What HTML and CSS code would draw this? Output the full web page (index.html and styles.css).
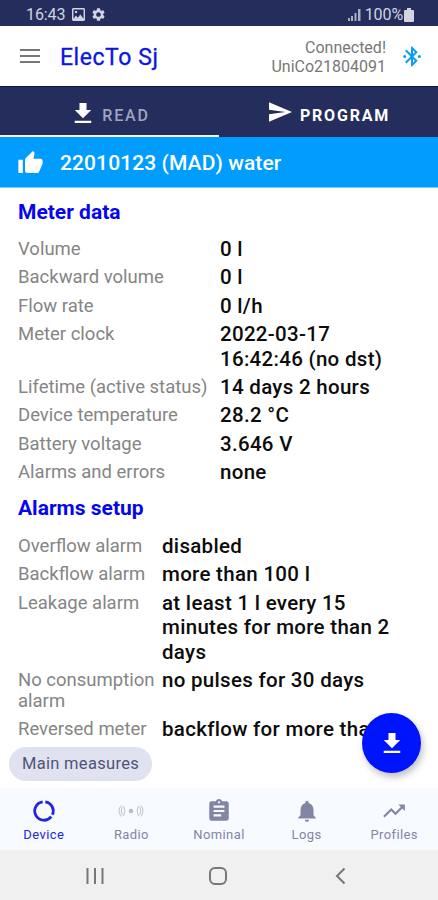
FILE: index.html
```html
<!DOCTYPE html>
<html lang="en">
<head>
<meta charset="utf-8">
<meta name="viewport" content="width=device-width">
<title>ElecTo Sj</title>
<link rel="stylesheet" href="styles.css">
</head>
<body>
<div class="status">
  <span class="clock">16:43</span>
  <svg class="s-img" viewBox="3 3 18 18"><path d="M21 19V5c0-1.100-.9-2-2-2H5c-1.100 0-2 .9-2 2v14c0 1.100.9 2 2 2h14c1.100 0 2-.9 2-2zM5 5h14v13H5zM8.500 13.500l2.500 3 3.500-4.500 4.500 6H5zM7 7h3v3H7z" fill-rule="evenodd"/></svg>
  <svg class="s-gear" viewBox="2 2 20 20"><path d="M19.140 12.940c.04-.3.060-.61.060-.94 0-.32-.02-.64-.07-.94l2.030-1.580c.18-.14.230-.41.120-.61l-1.920-3.320c-.12-.22-.37-.29-.59-.22l-2.390.96c-.5-.38-1.030-.7-1.620-.94l-.36-2.540c-.04-.24-.24-.41-.48-.41h-3.840c-.24 0-.43.170-.47.410l-.36 2.540c-.59.240-1.130.570-1.620.940l-2.390-.96c-.22-.08-.47 0-.59.220L2.740 8.870c-.12.210-.08.470.120.610l2.030 1.580c-.05.3-.09.630-.09.940s.02.640.070.940l-2.030 1.580c-.18.140-.23.410-.12.610l1.920 3.320c.12.220.370.290.590.220l2.390-.96c.5.380 1.030.7 1.620.940l.36 2.540c.05.240.240.410.480.410h3.840c.24 0 .44-.17.470-.41l.36-2.540c.59-.24 1.130-.56 1.620-.94l2.390.96c.22.080.470 0 .59-.22l1.920-3.320c.12-.22.070-.47-.12-.61l-2.010-1.580zM12 15.600c-1.980 0-3.600-1.620-3.600-3.600s1.620-3.600 3.600-3.600 3.600 1.620 3.600 3.600-1.620 3.600-3.600 3.600z"/></svg>
  <svg class="s-signal" viewBox="0 0 13 12"><path d="M0 9h2v3H0zM3 7h2v5H3zM6.500 4h2v8h-2z"/><path d="M10 0h2.500v12H10z"/></svg>
  <span class="pct">100%</span>
  <svg class="s-bat" viewBox="0 0 10 14"><path d="M3 0h4v2h2q1 0 1 1v10q0 1-1 1H1q-1 0-1-1V3q0-1 1-1h2z"/></svg>
</div>
<header class="appbar">
  <div class="menu"><i></i><i></i><i></i></div>
  <h1>ElecTo Sj</h1>
  <div class="conn">Connected!<br>UniCo21804091</div>
  <svg class="bt" viewBox="3 2 18 20"><path d="M17.710 7.710L12 2h-1v7.590L6.410 5 5 6.410 10.590 12 5 17.590 6.410 19 11 14.410V22h1l5.710-5.710-4.300-4.290 4.300-4.290zM13 5.830l1.880 1.880L13 9.590V5.830zm1.880 10.460L13 18.170v-3.760l1.880 1.880z"/><circle cx="4.700" cy="12" r="1.500"/><circle cx="19.300" cy="12" r="1.500"/></svg>
</header>
<nav class="tabs">
  <div class="tab on"><svg class="dl" viewBox="5 3 14 17"><path d="M19 9h-4V3H9v6H5l7 7 7-7zM5 18v2h14v-2H5z"/></svg><span>READ</span></div>
  <div class="tab"><svg class="send" viewBox="2 3 21 18"><path d="M2.010 21L23 12 2.010 3 2 10l15 2-15 2z"/></svg><span>PROGRAM</span></div>
</nav>
<div class="banner">
  <svg viewBox="1 1 22 20"><path d="M1 21h4V9H1v12zm22-11c0-1.100-.9-2-2-2h-6.310l.95-4.570.03-.32c0-.41-.17-.79-.44-1.060L14.170 1 7.590 7.590C7.220 7.950 7 8.450 7 9v10c0 1.100.9 2 2 2h9c.83 0 1.540-.5 1.840-1.220l3.020-7.050c.09-.23.140-.47.140-.73v-2z"/></svg>
  <span>22010123 (MAD) water</span>
</div>
<main class="content">
  <h2>Meter data</h2>
  <dl class="meter">
    <dt>Volume</dt><dd>0 l</dd>
    <dt>Backward volume</dt><dd>0 l</dd>
    <dt>Flow rate</dt><dd>0 l/h</dd>
    <dt>Meter clock</dt><dd>2022-03-17<br>16:42:46 (no dst)</dd>
    <dt>Lifetime (active status)</dt><dd>14 days 2 hours</dd>
    <dt>Device temperature</dt><dd>28.2 °C</dd>
    <dt>Battery voltage</dt><dd>3.646 V</dd>
    <dt>Alarms and errors</dt><dd>none</dd>
  </dl>
  <h2 class="second">Alarms setup</h2>
  <dl class="alarms">
    <dt>Overflow alarm</dt><dd>disabled</dd>
    <dt>Backflow alarm</dt><dd>more than 100 l</dd>
    <dt>Leakage alarm</dt><dd>at least 1 l every 15<br>minutes for more than 2<br>days</dd>
    <dt>No consumption<br>alarm</dt><dd>no pulses for 30 days</dd>
    <dt>Reversed meter</dt><dd>backflow for more tha</dd>
  </dl>
  <div class="chip">Main measures</div>
  <div class="fab"><svg class="dl" viewBox="5 3 14 17"><path d="M19 9h-4V3H9v6H5l7 7 7-7zM5 18v2h14v-2H5z"/></svg></div>
</main>
<nav class="bottom">
  <div class="item on"><svg viewBox="0 0 24 24"><path class="ring" d="M13.200 3.600a8.500 8.500 0 0 1 6.600 11.900M18.700 17.200A8.500 8.500 0 1 1 10.800 3.600"/></svg><span>Device</span></div>
  <div class="item radio"><svg viewBox="0 0 26 26"><circle cx="13" cy="13" r="2.200"/><path class="ln" d="M3 7.500q-4 5.500 0 11M23 7.500q4 5.500 0 11M4.200 9q-2 4 0 8M21.800 9q2 4 0 8M5.500 8q3 5 0 10M20.500 8q-3 5 0 10"/></svg><span>Radio</span></div>
  <div class="item"><svg viewBox="0 0 24 24"><path d="M19 3h-4.180C14.400 1.840 13.300 1 12 1c-1.300 0-2.400.84-2.820 2H5c-1.100 0-2 .9-2 2v14c0 1.100.9 2 2 2h14c1.100 0 2-.9 2-2V5c0-1.100-.9-2-2-2zm-7 0c.55 0 1 .45 1 1s-.45 1-1 1-1-.45-1-1 .45-1 1-1zm2 14H7v-2h7v2zm3-4H7v-2h10v2zm0-4H7V7h10v2z"/></svg><span>Nominal</span></div>
  <div class="item"><svg viewBox="0 0 24 24"><path d="M12 22c1.100 0 2-.9 2-2h-4c0 1.100.9 2 2 2zm6-6v-5c0-3.070-1.640-5.640-4.500-6.320V4c0-.83-.67-1.500-1.500-1.500s-1.500.67-1.500 1.500v.68C7.630 5.360 6 7.920 6 11v5l-2 2v1h16v-1l-2-2z"/></svg><span>Logs</span></div>
  <div class="item"><svg viewBox="0 0 24 24"><path d="M16 6l2.290 2.290-4.880 4.880-4-4L2 16.590 3.410 18l6-6 4 4 6.300-6.290L22 12V6z"/></svg><span>Profiles</span></div>
</nav>
<footer class="sys">
  <svg viewBox="0 0 18 18"><path d="M1.500 1v16M9 1v16M16.500 1v16"/></svg>
  <svg viewBox="0 0 18 18"><rect x="1" y="1" width="16" height="16" rx="5"/></svg>
  <svg viewBox="0 0 18 18"><path d="M12.500 1.500L5 9l7.500 7.500"/></svg>
</footer>
</body>
</html>
```
FILE: styles.css
```css
* { box-sizing: border-box; }
body {
  margin: 0;
  width: 438px;
  height: 900px;
  display: flex;
  flex-direction: column;
  overflow: hidden;
  background: #fff;
  font-family: Roboto, "Liberation Sans", sans-serif;
}
svg { display: block; flex: none; fill: currentColor; }
h1, h2, dl, dt, dd { margin: 0; }

.status {
  height: 26px;
  flex: none;
  display: flex;
  align-items: center;
  padding: 3px 24px 0 26px;
  background: #252d5d;
  color: #d2d4e0;
  font-size: 16px;
  letter-spacing: -.1px;
}
.clock { width: 46px; }
.s-img { width: 13px; height: 13px; margin-right: 7px; }
.s-gear { width: 13px; height: 13px; }
.s-signal { width: 13px; height: 12px; margin-left: auto; color: #a9adc4; }
.pct { margin-left: 4px; }
.s-bat { width: 10px; height: 14px; margin-left: 1px; }

.appbar {
  height: 60px;
  flex: none;
  display: flex;
  align-items: center;
  padding: 0 17px 0 20px;
}
.menu { width: 20px; display: flex; flex-direction: column; gap: 4px; }
.menu i { height: 2px; background: #777; }
h1 {
  margin-left: 20px;
  padding-top: 2px;
  font-size: 23px;
  line-height: 27px;
  font-weight: 400;
  letter-spacing: .55px;
  color: #0b16e0;
  -webkit-text-stroke: .3px #0b16e0;
}
.conn {
  margin-left: auto;
  text-align: right;
  font-size: 16px;
  line-height: 19px;
  color: #777;
  padding-top: 2px;
}
.bt { width: 18px; height: 21px; margin-left: 17px; color: #0c9cf5; }

.tabs {
  height: 51px;
  flex: none;
  display: flex;
  background: #252d5d;
  border-top: 1px solid #11134a;
  color: #fff;
}
.tab {
  flex: 1;
  display: flex;
  align-items: center;
  justify-content: center;
  padding-top: 6px;
  border-bottom: 2px solid transparent;
  font-size: 16px;
  letter-spacing: 1.800px;
}
.tab.on { border-color: #f2f4fa; }
.tab span { padding-top: 3px; font-weight: 700; }
.tab.on span { color: #a0a4bd; font-weight: 500; }
.tab .dl { width: 18px; height: 20px; margin: -3px 10px 0 5px; }
.send { width: 23px; height: 20px; margin: -4px 8px 0 2px; }

.banner {
  height: 51px;
  flex: none;
  display: flex;
  align-items: center;
  padding: 2px 0 0 18px;
  background: #009dff;
  border-bottom: 1px solid #7dcbff;
  color: #fff;
  font-size: 21px;
  font-weight: 500;
  letter-spacing: .1px;
}
.banner svg { width: 25px; height: 22px; margin: -2px 17px 0 0; }

.content {
  height: 600px;
  flex: none;
  position: relative;
  padding: 12px 0 0 18px;
}
h2 {
  font-size: 21px;
  line-height: 25px;
  font-weight: 700;
  color: #0505ee;
}
h2.second { margin-top: 11px; }
dl { display: grid; row-gap: 3.900px; align-items: start; }
.meter { grid-template-columns: 202px 1fr; margin-top: 12px; }
.alarms { grid-template-columns: 144px 1fr; margin-top: 13px; }
dt {
  padding-top: 2px;
  font-size: 18.500px;
  line-height: 21.500px;
  color: #858585;
  white-space: nowrap;
}
dd {
  font-size: 20.500px;
  line-height: 24.500px;
  font-weight: 500;
  letter-spacing: .3px;
  color: #0c0c0c;
  white-space: nowrap;
}
.chip {
  position: absolute;
  left: 9px;
  top: 559px;
  width: 143px;
  height: 34px;
  border-radius: 17px;
  background: #e0e3ef;
  color: #50537c;
  font-size: 16.500px;
  line-height: 34px;
  text-align: center;
  letter-spacing: .3px;
}
.fab {
  position: absolute;
  left: 362px;
  top: 525px;
  width: 59px;
  height: 60px;
  border-radius: 50%;
  background: #0014fc;
  color: #fff;
  display: grid;
  place-items: center;
  box-shadow: 2px 4px 7px rgba(0, 0, 0, .25);
}
.fab .dl { width: 18px; height: 20px; }

.bottom {
  height: 62px;
  flex: none;
  display: flex;
  background: #f7faff;
  color: #8385a5;
}
.item {
  flex: 1;
  display: flex;
  flex-direction: column;
  align-items: center;
  padding-top: 10px;
  font-size: 13px;
  line-height: 16px;
  letter-spacing: .4px;
}
.item svg { width: 26px; height: 26px; margin-bottom: 3px; }
.item.on { color: #2228d8; }
.ring { fill: none; stroke: currentColor; stroke-width: 2.600; }
.radio svg { color: #b8bbc8; }
.ln { fill: none; stroke: currentColor; stroke-width: .9; }

.sys {
  height: 50px;
  flex: none;
  display: flex;
  gap: 105px;
  padding: 17px 0 0 86px;
  background: #f0f0f0;
}
.sys svg { width: 18px; height: 18px; fill: none; stroke: #777; stroke-width: 2; }
```
